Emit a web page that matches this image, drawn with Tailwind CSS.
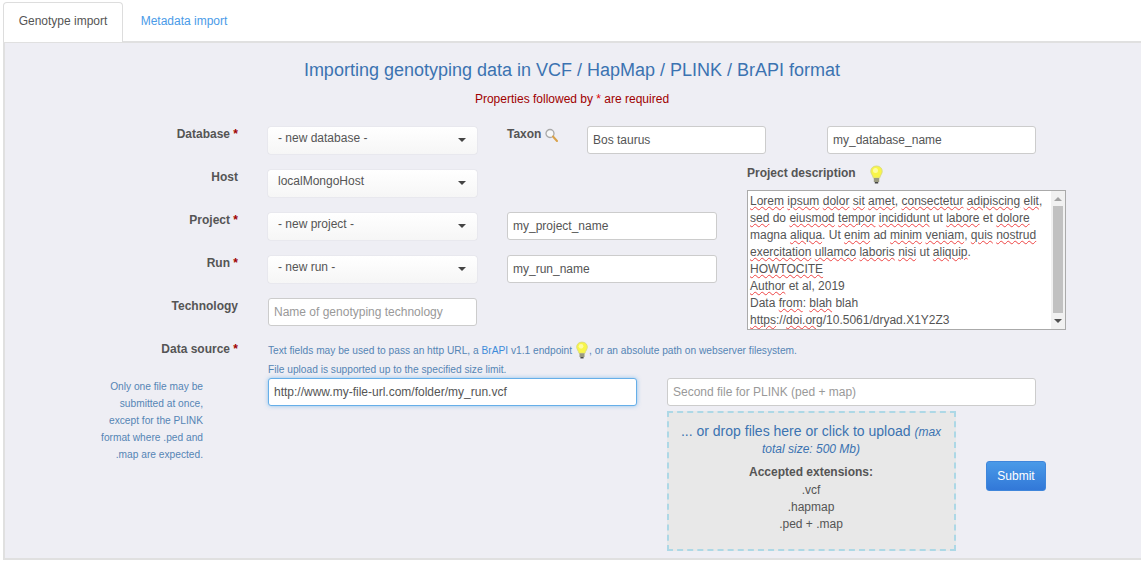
<!DOCTYPE html>
<html lang="en">
<head>
    <meta charset="UTF-8">
    <title>Genotype import</title>
    <script src="https://cdn.jsdelivr.net/npm/@tailwindcss/browser@4"></script>
</head>
<body class="bg-white font-['Liberation_Sans',Arial,sans-serif] text-[#555] text-[12px] leading-[17px] overflow-hidden">
    <div class="h-[41px] pl-[3px] flex">
        <div class="w-[120px] h-[40px] mt-[2px] bg-white border border-b-0 border-[#ddd] rounded-t-[4px] text-center leading-[37px] text-[12px] text-[#555]">Genotype import</div>
        <div class="w-[122px] h-[41px] text-center leading-[43px] text-[12px] text-[#4a9be8]">Metadata import</div>
    </div>
    <div class="ml-[3px] w-[1138px] h-[519px] bg-[#eeeef4] border-t-2 border-l-2 border-b-2 border-[#e0e0e0]">
        <h1 class="pt-[15px] pr-[2px] text-center text-[18px] leading-[24px] text-[#3b73b1] font-normal">Importing genotyping data in VCF / HapMap / PLINK / BrAPI format</h1>
        <p class="mt-[9px] pr-[2px] text-center text-[#a00000] leading-[17px]">Properties followed by <span class="text-[#e00000]">*</span> are required</p>

        <div class="mt-[18px] grid grid-cols-[233px_209px_210px_319px] gap-x-[30px] grid-rows-[43px_43px_43px_43px_43px]">
            <label class="font-bold text-right">Database <span class="text-[#a00000]">*</span></label>
            <div class="mt-[1px] h-[27px] rounded-[3px] bg-gradient-to-b from-white to-[#f6f6f6] shadow-[0_0_1px_rgba(0,0,0,0.25)] flex items-center justify-between pl-[10px] pr-[11px]"><span class="-mt-[4px]">- new database -</span><span class="-mt-[2px] w-0 h-0 border-x-[4px] border-t-[4px] border-x-transparent border-t-[#444]"></span></div>
            <div class="col-span-2 flex">
                <label class="font-bold w-[37px] shrink-0">Taxon</label>
                <svg class="ml-[1px] mt-[2px] w-[13px] h-[14px] shrink-0" viewBox="0 0 13 14"><circle cx="5" cy="5.500" r="4" fill="#f7f7f7" stroke="#a8a8a8" stroke-width="1.300"/><path d="M8 8.500 12 13" stroke="#d9a24a" stroke-width="2" stroke-linecap="round"/></svg>
                <input value="Bos taurus" class="ml-[29px] w-[179px] h-[28px] bg-white border border-[#ccc] rounded-[3px] px-[5px] text-[12px] text-[#555]">
                <input value="my_database_name" class="ml-[61px] w-[209px] h-[28px] bg-white border border-[#ccc] rounded-[3px] px-[5px] text-[12px] text-[#555]">
            </div>

            <label class="font-bold text-right">Host</label>
            <div class="mt-[1px] h-[27px] rounded-[3px] bg-gradient-to-b from-white to-[#f6f6f6] shadow-[0_0_1px_rgba(0,0,0,0.25)] flex items-center justify-between pl-[10px] pr-[11px]"><span class="-mt-[4px]">localMongoHost</span><span class="-mt-[2px] w-0 h-0 border-x-[4px] border-t-[4px] border-x-transparent border-t-[#444]"></span></div>
            <div></div>
            <div class="row-span-4">
                <div class="flex h-[21px]">
                    <label class="font-bold -mt-[4px]">Project description</label>
                    <svg class="ml-[13px] -mt-[4px] w-[15px] h-[20px]" viewBox="0 0 15 20"><path d="M7.500 1C4 1 1.800 3.300 1.800 6.300c0 2.500 1.800 3.700 2.600 6.700h6.200c.8-3 2.600-4.200 2.600-6.700C13.200 3.300 11 1 7.500 1Z" fill="#f8f548" stroke="#dcdc80"/><circle cx="6.500" cy="5.500" r="2.500" fill="#fdfca0"/><rect x="4.800" y="13" width="5.400" height="4" fill="#9a9a80"/><rect x="5.800" y="17" width="3.400" height="1.500" fill="#444"/></svg>
                </div>
                <div class="w-[319px] h-[140px] bg-white border border-[#aaa] flex overflow-hidden">
                    <div class="flex-1 pl-[2px] pt-[2px] text-[12px] leading-[17px] whitespace-nowrap">
                        <div><span class="underline decoration-wavy decoration-1 decoration-[#e44]">Lorem</span> <span class="underline decoration-wavy decoration-1 decoration-[#e44]">ipsum</span> <span class="underline decoration-wavy decoration-1 decoration-[#e44]">dolor</span> <span class="underline decoration-wavy decoration-1 decoration-[#e44]">sit</span> <span class="underline decoration-wavy decoration-1 decoration-[#e44]">amet</span>, <span class="underline decoration-wavy decoration-1 decoration-[#e44]">consectetur</span> <span class="underline decoration-wavy decoration-1 decoration-[#e44]">adipiscing</span> <span class="underline decoration-wavy decoration-1 decoration-[#e44]">elit</span>,</div>
                        <div><span class="underline decoration-wavy decoration-1 decoration-[#e44]">sed</span> do <span class="underline decoration-wavy decoration-1 decoration-[#e44]">eiusmod</span> <span class="underline decoration-wavy decoration-1 decoration-[#e44]">tempor</span> <span class="underline decoration-wavy decoration-1 decoration-[#e44]">incididunt</span> ut <span class="underline decoration-wavy decoration-1 decoration-[#e44]">labore</span> et <span class="underline decoration-wavy decoration-1 decoration-[#e44]">dolore</span></div>
                        <div>magna <span class="underline decoration-wavy decoration-1 decoration-[#e44]">aliqua</span>. Ut <span class="underline decoration-wavy decoration-1 decoration-[#e44]">enim</span> ad <span class="underline decoration-wavy decoration-1 decoration-[#e44]">minim</span> <span class="underline decoration-wavy decoration-1 decoration-[#e44]">veniam</span>, <span class="underline decoration-wavy decoration-1 decoration-[#e44]">quis</span> <span class="underline decoration-wavy decoration-1 decoration-[#e44]">nostrud</span></div>
                        <div><span class="underline decoration-wavy decoration-1 decoration-[#e44]">exercitation</span> <span class="underline decoration-wavy decoration-1 decoration-[#e44]">ullamco</span> <span class="underline decoration-wavy decoration-1 decoration-[#e44]">laboris</span> <span class="underline decoration-wavy decoration-1 decoration-[#e44]">nisi</span> ut <span class="underline decoration-wavy decoration-1 decoration-[#e44]">aliquip</span>.</div>
                        <div><span class="underline decoration-wavy decoration-1 decoration-[#e44]">HOWTOCITE</span></div>
                        <div><span class="underline decoration-wavy decoration-1 decoration-[#e44]">Author</span> et al, 2019</div>
                        <div>Data <span class="underline decoration-wavy decoration-1 decoration-[#e44]">from</span>: <span class="underline decoration-wavy decoration-1 decoration-[#e44]">blah</span> blah</div>
                        <div><span class="underline decoration-wavy decoration-1 decoration-[#e44]">https</span>://<span class="underline decoration-wavy decoration-1 decoration-[#e44]">doi.org</span>/10.5061/dryad.X1Y2Z3</div>
                    </div>
                    <div class="w-[14px] bg-[#f1f1f1] flex flex-col items-center">
                        <span class="mt-[6px] w-0 h-0 border-x-[4px] border-b-[4px] border-x-transparent border-b-[#a3a3a3]"></span>
                        <div class="mt-[5px] w-[10px] h-[107px] bg-[#c1c1c1]"></div>
                        <span class="mt-[6px] w-0 h-0 border-x-[4px] border-t-[4px] border-x-transparent border-t-[#505050]"></span>
                    </div>
                </div>
            </div>

            <label class="font-bold text-right">Project <span class="text-[#a00000]">*</span></label>
            <div class="mt-[1px] h-[27px] rounded-[3px] bg-gradient-to-b from-white to-[#f6f6f6] shadow-[0_0_1px_rgba(0,0,0,0.25)] flex items-center justify-between pl-[10px] pr-[11px]"><span class="-mt-[4px]">- new project -</span><span class="-mt-[2px] w-0 h-0 border-x-[4px] border-t-[4px] border-x-transparent border-t-[#444]"></span></div>
            <input value="my_project_name" class="w-[210px] h-[28px] bg-white border border-[#ccc] rounded-[3px] px-[5px] text-[12px] text-[#555]">

            <label class="font-bold text-right">Run <span class="text-[#a00000]">*</span></label>
            <div class="mt-[1px] h-[27px] rounded-[3px] bg-gradient-to-b from-white to-[#f6f6f6] shadow-[0_0_1px_rgba(0,0,0,0.25)] flex items-center justify-between pl-[10px] pr-[11px]"><span class="-mt-[4px]">- new run -</span><span class="-mt-[2px] w-0 h-0 border-x-[4px] border-t-[4px] border-x-transparent border-t-[#444]"></span></div>
            <input value="my_run_name" class="w-[210px] h-[28px] bg-white border border-[#ccc] rounded-[3px] px-[5px] text-[12px] text-[#555]">

            <label class="font-bold text-right">Technology</label>
            <input placeholder="Name of genotyping technology" class="w-[209px] h-[28px] bg-white border border-[#ccc] rounded-[3px] px-[5px] text-[12px] text-[#555] placeholder:text-[#999]">
            <div></div>
        </div>

        <div class="flex">
            <div class="w-[233px] shrink-0 text-right font-bold">Data source <span class="text-[#a00000]">*</span></div>
            <div class="ml-[30px] text-[10.2px] text-[#5585b5] leading-[15px] whitespace-nowrap">
                <div class="flex items-center h-[18px]">Text fields may be used to pass an http URL, a&nbsp;<span class="text-[#3d8bd9]">BrAPI</span>&nbsp;v1.1 endpoint
                    <svg class="ml-[3px] w-[14px] h-[19px]" viewBox="0 0 15 20"><path d="M7.500 1C4 1 1.800 3.300 1.800 6.300c0 2.500 1.800 3.700 2.600 6.700h6.200c.8-3 2.600-4.200 2.600-6.700C13.200 3.300 11 1 7.500 1Z" fill="#f8f548" stroke="#dcdc80"/><circle cx="6.500" cy="5.500" r="2.500" fill="#fdfca0"/><rect x="4.800" y="13" width="5.400" height="4" fill="#9a9a80"/><rect x="5.800" y="17" width="3.400" height="1.500" fill="#444"/></svg>
                    <span>, or an absolute path on webserver filesystem.</span></div>
                <div class="mt-[3px]">File upload is supported up to the specified size limit.</div>
            </div>
        </div>

        <div class="flex mt-[1px]">
            <div class="w-[198px] shrink-0 text-right text-[10.2px] leading-[17px] text-[#5585b5]">
                <p>Only one file may be</p>
                <p>submitted at once,</p>
                <p>except for the PLINK</p>
                <p>format where .ped and</p>
                <p>.map are expected.</p>
            </div>
            <input value="http://www.my-file-url.com/folder/my_run.vcf" class="ml-[65px] w-[369px] h-[28px] bg-white border border-[#66afe9] rounded-[3px] px-[5px] text-[12px] text-[#555] shadow-[0_0_4px_rgba(102,175,233,0.7)]">
            <div class="ml-[30px] w-[369px] shrink-0">
                <input placeholder="Second file for PLINK (ped + map)" class="w-[369px] h-[28px] bg-white border border-[#ccc] rounded-[3px] px-[5px] text-[12px] placeholder:text-[#999]">
                <div class="flex mt-[5px]">
                    <div class="w-[289px] shrink-0 h-[140px] bg-[#e8e8e8] border-2 border-dashed border-[#add8e6] text-center pt-[10px] pl-[10px] pr-[11px]">
                        <p class="text-[14px] leading-[16px] text-[#3b73b1]">... or drop files here or click to upload <em class="text-[12px] leading-[16px] italic">(max total size: 500 Mb)</em></p>
                        <p class="mt-[7px] mb-[1px] font-bold">Accepted extensions:</p>
                        <p>.vcf</p>
                        <p>.hapmap</p>
                        <p>.ped + .map</p>
                    </div>
                    <button class="ml-[30px] mt-[50px] w-[60px] h-[30px] shrink-0 rounded-[3px] bg-gradient-to-b from-[#4a9ae8] to-[#3278d8] border border-[#3f86db] text-white text-[12px]">Submit</button>
                </div>
            </div>
        </div>
    </div>
</body>
</html>
